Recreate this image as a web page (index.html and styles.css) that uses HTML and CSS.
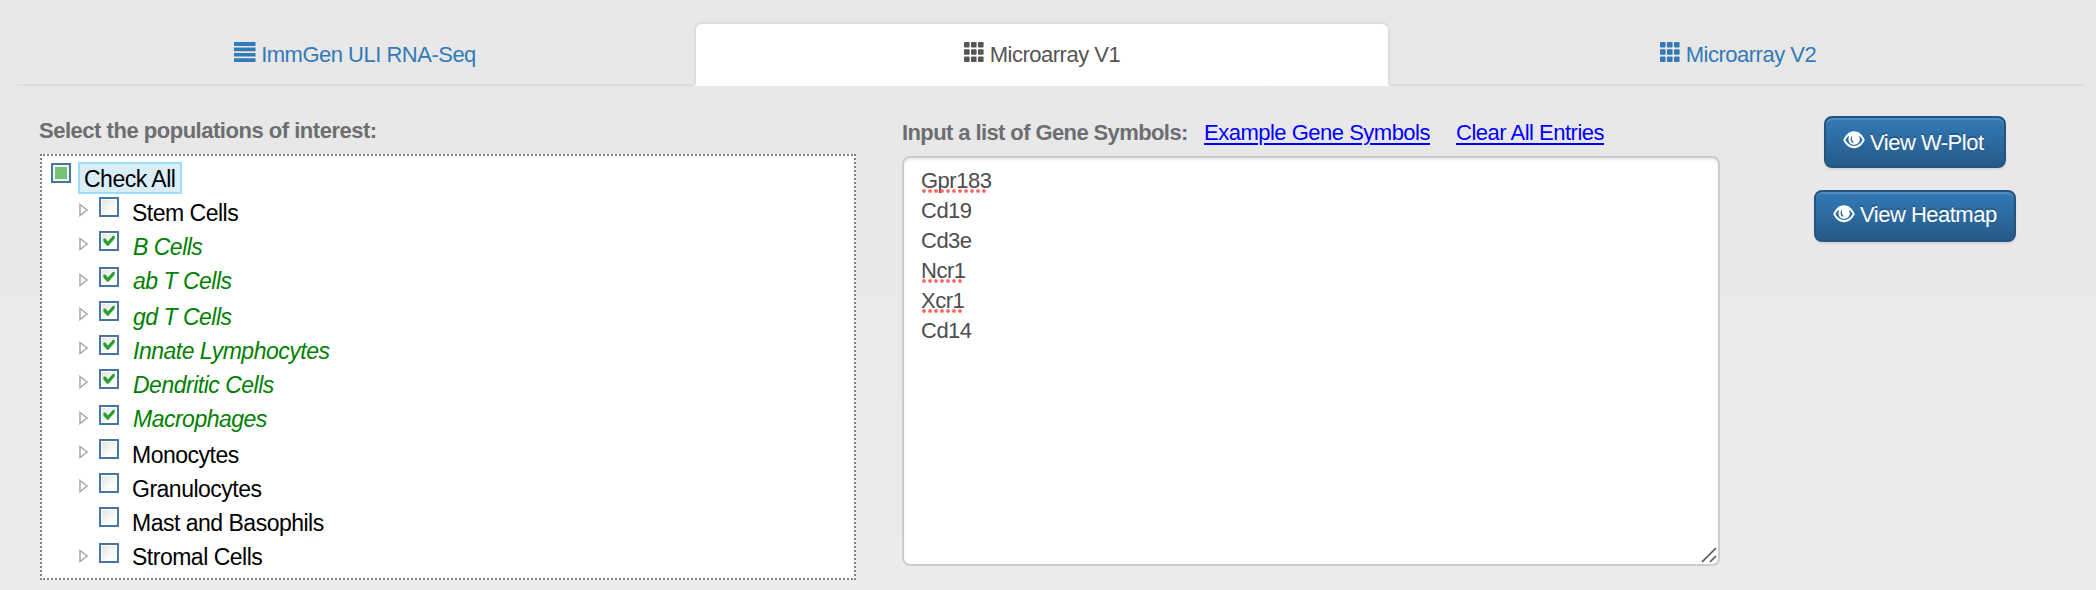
FILE: index.html
```html
<!DOCTYPE html>
<html lang="en">
<head>
<meta charset="utf-8">
<title>Microarray V1</title>
<link rel="stylesheet" href="styles.css">
</head>
<body>
<svg class="defs" width="0" height="0" aria-hidden="true">
  <symbol id="grid" viewBox="0 0 20 20">
    <g fill="currentColor">
      <rect x="0" y="0" width="5.6" height="5.6" rx="1"/><rect x="7" y="0" width="5.6" height="5.6" rx="1"/><rect x="14" y="0" width="5.6" height="5.6" rx="1"/>
      <rect x="0" y="7.2" width="5.6" height="5.6" rx="1"/><rect x="7" y="7.2" width="5.6" height="5.6" rx="1"/><rect x="14" y="7.2" width="5.6" height="5.6" rx="1"/>
      <rect x="0" y="14.4" width="5.6" height="5.6" rx="1"/><rect x="7" y="14.4" width="5.6" height="5.6" rx="1"/><rect x="14" y="14.4" width="5.6" height="5.6" rx="1"/>
    </g>
  </symbol>
  <symbol id="eye" viewBox="0 0 22 18">
    <path fill="currentColor" fill-rule="evenodd" d="M11 0.3C5.5 0.3 2.2 4.4 0.2 9C2.2 13.2 5.7 17.2 11 17.2C16.3 17.2 19.8 13.2 21.8 9C19.8 4.4 16.5 0.3 11 0.3ZM6.2 4.4C5.2 7 5.2 9.8 6.6 11.7C7.6 13 9.2 13.8 11 13.8C14.2 13.8 16.7 11.5 16.8 8.3C16.8 6.8 16.4 5.5 15.8 4.4C17.5 5.5 18.8 7 19.6 9C17.6 12.5 14.7 15 11 15C7.3 15 4.4 12.5 2.4 9C3.2 7 4.5 5.5 6.2 4.4ZM8.3 5.6C7.2 7.6 7.5 9.6 8.6 10.9C9.5 11.7 10.8 11.8 11.4 11.1C9.4 10.6 8.4 8.5 9.1 6.5C9.4 5.4 8.7 5 8.3 5.6Z"/>
  </symbol>
  <symbol id="arrow" viewBox="0 0 9 14">
    <path d="M1 1.5L8 7L1 12.5Z" fill="#fff" stroke="#a9a9a9" stroke-width="1.5"/>
  </symbol>
  <symbol id="tick" viewBox="0 0 16 16">
    <path d="M2.4 5.8L4.6 5.6L6.8 8.6L11.8 2.9L13.8 2.8L13.7 5.6L7.4 12.8L6 12.7L2.4 8.6Z" fill="#25a02b"/>
  </symbol>
</svg>

<ul class="tabs">
  <li class="tab"><svg class="list-icon" viewBox="0 0 22 20"><path d="M0 0h21.5v4H0zM0 5.6h21.5v3.6H0zM0 10.9h21.5v3.5H0zM0 16.2h21.5v3.8H0z" fill="currentColor"/></svg><span>ImmGen ULI RNA-Seq</span></li>
  <li class="tab active"><svg class="grid-icon"><use href="#grid"/></svg><span>Microarray V1</span></li>
  <li class="tab"><svg class="grid-icon"><use href="#grid"/></svg><span>Microarray V2</span></li>
</ul>

<main class="content">
  <section class="populations">
    <h2 class="heading">Select the populations of interest:</h2>
    <div class="tree">
      <div class="root"><span class="box partial"></span><span class="selected">Check All</span></div>
      <div class="row"><svg class="arrow"><use href="#arrow"/></svg><span class="box"></span><span class="name">Stem Cells</span></div>
      <div class="row on"><svg class="arrow"><use href="#arrow"/></svg><span class="box"><svg class="tick"><use href="#tick"/></svg></span><span class="name">B Cells</span></div>
      <div class="row on tall"><svg class="arrow"><use href="#arrow"/></svg><span class="box"><svg class="tick"><use href="#tick"/></svg></span><span class="name">ab T Cells</span></div>
      <div class="row on"><svg class="arrow"><use href="#arrow"/></svg><span class="box"><svg class="tick"><use href="#tick"/></svg></span><span class="name">gd T Cells</span></div>
      <div class="row on"><svg class="arrow"><use href="#arrow"/></svg><span class="box"><svg class="tick"><use href="#tick"/></svg></span><span class="name">Innate Lymphocytes</span></div>
      <div class="row on"><svg class="arrow"><use href="#arrow"/></svg><span class="box"><svg class="tick"><use href="#tick"/></svg></span><span class="name">Dendritic Cells</span></div>
      <div class="row on tall"><svg class="arrow"><use href="#arrow"/></svg><span class="box"><svg class="tick"><use href="#tick"/></svg></span><span class="name">Macrophages</span></div>
      <div class="row"><svg class="arrow"><use href="#arrow"/></svg><span class="box"></span><span class="name">Monocytes</span></div>
      <div class="row"><svg class="arrow"><use href="#arrow"/></svg><span class="box"></span><span class="name">Granulocytes</span></div>
      <div class="row"><span class="arrow"></span><span class="box"></span><span class="name">Mast and Basophils</span></div>
      <div class="row tall"><svg class="arrow"><use href="#arrow"/></svg><span class="box"></span><span class="name">Stromal Cells</span></div>
    </div>
  </section>

  <section class="genes">
    <div class="genes-head">
      <h2 class="heading">Input a list of Gene Symbols:</h2>
      <a class="link example">Example Gene Symbols</a>
      <a class="link clear">Clear All Entries</a>
    </div>
    <div class="field">
      <div><span class="misspelt long">Gpr183</span></div>
      <div>Cd19</div>
      <div>Cd3e</div>
      <div><span class="misspelt">Ncr1</span></div>
      <div><span class="misspelt">Xcr1</span></div>
      <div>Cd14</div>
      <svg class="grip" viewBox="0 0 16 16"><path d="M1 15L15 1M9 15L15 9" stroke="#fff" stroke-width="4"/><path d="M1 15L15 1M9 15L15 9" stroke="#555" stroke-width="1.7"/></svg>
    </div>
  </section>

  <section class="actions">
    <button class="btn plot"><svg class="eye"><use href="#eye"/></svg><span>View W-Plot</span></button>
    <button class="btn heat"><svg class="eye"><use href="#eye"/></svg><span>View Heatmap</span></button>
  </section>
</main>
</body>
</html>
```

FILE: styles.css
```css
* { box-sizing: border-box; }
body {
  margin: 0;
  height: 590px;
  overflow: hidden;
  background: linear-gradient(#e7e7e7, #ebebeb);
  font: 22px/30px "Liberation Sans", Arial, sans-serif;
  letter-spacing: -.5px;
  color: #4d4d4d;
}
svg { display: block; flex: none; }
.defs { position: absolute; }

.tabs {
  display: grid;
  grid-template-columns: 678px 696px 696px;
  margin: 0 0 0 16px;
  padding: 22px 0 0;
  list-style: none;
}
.tab {
  display: flex;
  justify-content: center;
  height: 64px;
  padding-top: 17px;
  border: 2px solid transparent;
  border-bottom-color: #ddd;
  color: #337ab7;
}
.tab span { margin-top: -1px; }
.active {
  background: #fff;
  border-color: #ddd;
  border-bottom-color: #fff;
  border-radius: 8px 8px 0 0;
  color: #555;
}
.list-icon { width: 22px; height: 20px; margin: 1px 5px 0 0; }
.grid-icon { width: 20px; height: 20px; margin: 1px 6px 0 0; }

.content { display: flex; align-items: flex-start; }
.heading {
  margin: 0;
  font-size: 22px;
  line-height: 30px;
  font-weight: bold;
  letter-spacing: -.6px;
  color: #6d6e70;
  white-space: nowrap;
}
.populations { width: 816px; margin: 30px 46px 0 40px; }
.populations .heading { margin: 0 0 8px -1px; letter-spacing: -.48px; }
.tree {
  height: 426px;
  border: 2px dotted #808080;
  background: #fff;
  font-size: 23px;
  line-height: 34px;
  color: #000;
  padding-top: 6px;
}
.root { display: flex; height: 34px; padding-left: 9px; }
.box {
  flex: none;
  width: 20px;
  height: 20px;
  border: 2px solid #4776a5;
  background: linear-gradient(135deg, #e2e2df, #fff 75%);
  box-shadow: inset 0 0 0 1px #fff;
}
.root .box { margin-top: 1px; }
.partial {
  padding: 2px;
  background: #74c274 content-box;
  box-shadow: inset 0 0 0 2px #f1f1ed;
}
.selected {
  width: 104px;
  height: 32px;
  margin-left: 7px;
  padding-left: 4px;
  border: 2px solid #99defd;
  background: #d9eef9;
  line-height: 30px;
  white-space: nowrap;
}
.row { display: flex; height: 34px; padding-left: 37px; }
.tall { height: 36px; }
.arrow { width: 9px; height: 14px; margin: 7px 11px 0 0; }
.row .box { margin: 1px 13px 0 0; }
.tall .arrow { margin-top: 9px; }
.tall .box { margin-top: 3px; }
.on .name { padding-left: 1px; color: #008000; font-style: italic; }
.tick { width: 16px; height: 16px; }

.genes { width: 818px; margin-top: 32px; }
.genes-head { display: flex; align-items: baseline; height: 38px; }
.genes-head .heading { width: 289px; }
.link {
  color: #00f;
  white-space: nowrap;
  text-decoration: underline;
  text-decoration-thickness: 2px;
  text-underline-offset: 3px;
}
.example { width: 225px; margin-left: 13px; }
.clear { margin-left: 27px; }
.field {
  position: relative;
  height: 410px;
  padding: 8px 17px;
  border: 2px solid #ccc;
  border-radius: 8px;
  background: #fff;
  box-shadow: inset 0 2px 2px rgba(0, 0, 0, .075);
}
.misspelt { position: relative; }
.misspelt::after {
  content: "";
  position: absolute;
  left: 1px;
  top: 21px;
  width: 41px;
  height: 4px;
  background: radial-gradient(circle at 2px 2px, #f66 1.4px, rgba(255, 102, 102, 0) 2.3px) 0 0 / 6px 4px repeat-x;
}
.long::after { width: 65px; }
.grip { position: absolute; right: 1px; bottom: 1px; width: 16px; height: 16px; }

.actions {
  display: flex;
  flex-direction: column;
  align-items: center;
  gap: 22px;
  width: 202px;
  margin: 30px 0 0 94px;
}
.btn {
  display: flex;
  align-items: flex-start;
  height: 52px;
  padding: 0 0 0 17px;
  border: 2px solid #245580;
  border-radius: 8px;
  background: linear-gradient(#337ab7, #265a88);
  box-shadow: inset 0 2px 0 rgba(255, 255, 255, .15), 0 2px 2px rgba(0, 0, 0, .075);
  font: inherit;
  letter-spacing: inherit;
  color: #fff;
  text-shadow: 0 -2px 0 rgba(0, 0, 0, .2);
  white-space: nowrap;
}
.plot { width: 182px; }
.heat { width: 202px; }
.eye { width: 22px; height: 18px; margin: 13px 5px 0 0; }
.plot span { margin-top: 10px; }
.heat span { margin-top: 8px; }
```
